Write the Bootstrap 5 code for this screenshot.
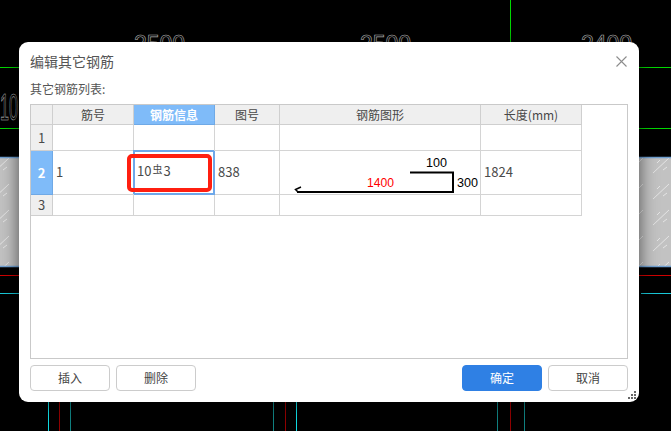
<!DOCTYPE html>
<html lang="zh">
<head>
<meta charset="utf-8">
<title>编辑其它钢筋</title>
<link rel="stylesheet" href="https://cdn.jsdelivr.net/npm/bootstrap@5.3.0/dist/css/bootstrap.min.css">
<style>
html,body{margin:0;height:431px;overflow:hidden;background:#000}
body{font-family:"Noto Sans CJK SC","Liberation Sans",sans-serif;font-size:12px;color:#444}
.cad-canvas{position:absolute;left:0;top:0;width:671px;height:431px;display:block}
.cad-num{font-family:"Liberation Sans",sans-serif;font-size:23px;fill:none;stroke:#c8c8c8;stroke-width:.7}
.cad-num-big{font-size:37px}
.edit-dialog{position:absolute;left:19px;top:42px;width:620px;height:360px;background:#fff;border-radius:9px;box-shadow:0 0 18px rgba(0,0,0,.6);padding:0 11px;display:flex;flex-direction:column}
.dlg-head{height:38px;display:flex;justify-content:space-between;align-items:center;font-size:14px;color:#555}
.dlg-head svg{margin-right:1px}
.dlg-label{height:24px;line-height:18px;color:#555}
.grid-wrap{flex:0 0 255px;border:1px solid #c9c9c9;position:relative}
.rebar-grid{width:551px;table-layout:fixed;border-collapse:separate;border-spacing:0;margin:0}
.rebar-grid th,.rebar-grid td{border:solid #d4d4d4;border-width:0 1px 1px 0;padding:0;font-weight:400;vertical-align:middle;background:#fff;color:#4a4a4a;line-height:14px}
.rebar-grid thead th{height:20px;background:#efefef;text-align:center;border-color:#cfcfcf;color:#484848}
.rebar-grid tbody th{background:#efefef;text-align:center;border-color:#cfcfcf;font-size:13px}
.rebar-grid td{padding:0 0 2px 3px;font-size:13px}
.rebar-grid .row-1{height:26px}.rebar-grid .row-2{height:44px}.rebar-grid .row-3{height:21px}
.rebar-grid th.picked{background:#7fbbf9;color:#fff;font-weight:700;border-color:#6fa9e6}
.rebar-grid td.cell-active{box-shadow:inset 0 0 0 1px #6ea8ea,-1px -1px 0 0 #6ea8ea;border-color:#6ea8ea;padding-left:3px;padding-bottom:3px}
.rebar-grid td.cell-shape{padding:0;position:relative}
.shape-svg{display:block;width:200px;height:43px}
.shape-svg text{font-family:"Liberation Sans",sans-serif;font-size:13px}
.grade-mark{font-size:10px;position:relative;top:-3px;margin:0 1px}
.callout{position:absolute;left:96px;top:49px;width:85px;height:38px;border:4px solid #ff1f10;border-radius:5px;pointer-events:none}
.dlg-foot{display:flex;justify-content:space-between;padding-top:6px}
.btn-pair{display:flex;gap:6px}
.dlg-foot .btn{width:80px;height:26px;padding:0;font-size:12px;border-radius:4px;line-height:24px}
.btn-plain{background:#fff;border:1px solid #ccc;color:#444}
.btn-ok{background:#2f80e4;border:1px solid #2f80e4;color:#fff}
.grip{position:absolute;right:2px;bottom:2px;width:9px;height:9px}
</style>
</head>
<body>
<svg class="cad-canvas" viewBox="0 0 671 431">
  <defs>
    <pattern id="hatch" x="639" y="157" width="55" height="26" patternUnits="userSpaceOnUse">
      <g stroke="#e4e4e4" stroke-width="1" fill="none">
        <path d="M14 16 L30 1"/>
        <path d="M18 6 L21 3"/>
        <path d="M24 13 L28 10"/>
        <path d="M0 5 L4 1"/>
      </g>
    </pattern>
  </defs>
  <rect x="0" y="157" width="671" height="109" fill="#c2c2c2"/>
  <rect x="0" y="157" width="671" height="109" fill="url(#hatch)"/>
  <g fill="none" stroke-width="1">
    <path d="M0 157.500H671M0 266.500H671" stroke="#6f9fd0" stroke-width="1.500"/>
    <path d="M0 67.500H671M0 128.500H671" stroke="#00d800"/>
    <path d="M510.500 0V42" stroke="#00d800"/>
    <path d="M0 275.500H671" stroke="#d00000"/>
    <path d="M0 293.500H19M641 293.500H671" stroke="#18c8d8"/>
    <path d="M48.500 402V431M296.500 402V431" stroke="#10d8e0"/>
    <path d="M59.500 402V431M285.500 402V431M510.500 402V431" stroke="#900000"/>
    <path d="M70.500 402V431M273.500 402V431M497.500 402V431M524.500 402V431" stroke="#108080"/>
  </g>
  <text class="cad-num" x="134" y="52">2500</text>
  <text class="cad-num" x="360" y="52">2500</text>
  <text class="cad-num" x="581" y="52">2400</text>
  <text class="cad-num cad-num-big" x="0" y="120" textLength="18" lengthAdjust="spacingAndGlyphs">10</text>
</svg>

<div class="edit-dialog">
  <div class="dlg-head">
    <span>编辑其它钢筋</span>
    <svg width="11" height="11" viewBox="0 0 11 11" aria-label="关闭"><path d="M.5 .5L10.500 10.500M10.500 .5L.5 10.500" stroke="#8c8c8c" stroke-width="1.100" fill="none"/></svg>
  </div>
  <div class="dlg-label">其它钢筋列表:</div>
  <div class="grid-wrap">
    <table class="rebar-grid">
      <colgroup><col style="width:22px"><col style="width:81px"><col style="width:81px"><col style="width:65px"><col style="width:201px"><col style="width:101px"></colgroup>
      <thead>
        <tr><th></th><th>筋号</th><th class="picked">钢筋信息</th><th>图号</th><th>钢筋图形</th><th>长度(mm)</th></tr>
      </thead>
      <tbody>
        <tr class="row-1"><th>1</th><td></td><td></td><td></td><td></td><td></td></tr>
        <tr class="row-2">
          <th class="picked">2</th>
          <td>1</td>
          <td class="cell-active">10<span class="grade-mark">虫</span>3</td>
          <td>838</td>
          <td class="cell-shape">
            <svg class="shape-svg" viewBox="0 0 200 43">
              <path d="M130 21.500H173V41H17" fill="none" stroke="#000" stroke-width="2"/>
              <path d="M21 36L15.500 38.500L18 41" fill="none" stroke="#000" stroke-width="1.500"/>
              <text x="146" y="16" fill="#000" textLength="21" lengthAdjust="spacingAndGlyphs">100</text>
              <text x="87" y="36" fill="#f00" textLength="27" lengthAdjust="spacingAndGlyphs">1400</text>
              <text x="177" y="36" fill="#000" textLength="21" lengthAdjust="spacingAndGlyphs">300</text>
            </svg>
          </td>
          <td>1824</td>
        </tr>
        <tr class="row-3"><th>3</th><td></td><td></td><td></td><td></td><td></td></tr>
      </tbody>
    </table>
    <div class="callout"></div>
  </div>
  <div class="dlg-foot">
    <div class="btn-pair">
      <button type="button" class="btn btn-plain">插入</button>
      <button type="button" class="btn btn-plain">删除</button>
    </div>
    <div class="btn-pair">
      <button type="button" class="btn btn-ok">确定</button>
      <button type="button" class="btn btn-plain">取消</button>
    </div>
  </div>
  <svg class="grip" viewBox="0 0 9 9"><g fill="#666"><rect x="6" y="0" width="2" height="2"/><rect x="3" y="3" width="2" height="2"/><rect x="6" y="3" width="2" height="2"/><rect x="0" y="6" width="2" height="2"/><rect x="3" y="6" width="2" height="2"/><rect x="6" y="6" width="2" height="2"/></g></svg>
</div>
<script src="https://cdn.jsdelivr.net/npm/bootstrap@5.3.0/dist/js/bootstrap.bundle.min.js"></script>
</body>
</html>
